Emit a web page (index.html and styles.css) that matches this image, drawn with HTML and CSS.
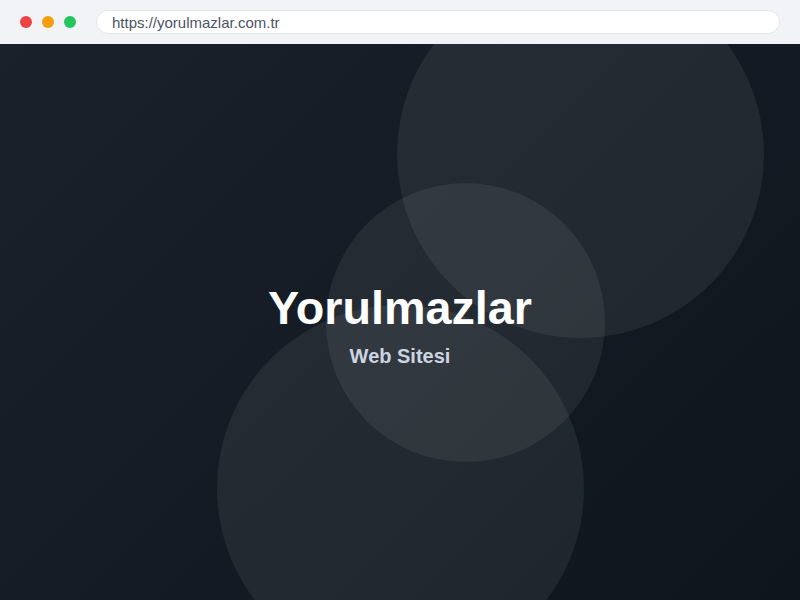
FILE: index.html
```
<!DOCTYPE html>
<html lang="tr">
<head>
<meta charset="utf-8">
<title>Yorulmazlar</title>
<link rel="stylesheet" href="styles.css">
</head>
<body>
<div class="window">
  <header class="chrome">
    <div class="dots">
      <span class="dot red"></span>
      <span class="dot orange"></span>
      <span class="dot green"></span>
    </div>
    <div class="url">https://yorulmazlar.com.tr</div>
  </header>
  <main class="hero">
    <span class="circle c1"></span>
    <span class="circle c2"></span>
    <span class="circle c3"></span>
    <div class="text">
      <h1 class="title">Yorulmazlar</h1>
      <p class="subtitle">Web Sitesi</p>
    </div>
  </main>
</div>
</body>
</html>
```
FILE: styles.css
```
* { box-sizing: border-box; }
html, body { margin: 0; padding: 0; }
body {
  width: 800px;
  height: 600px;
  overflow: hidden;
  font-family: "Liberation Sans", Arial, sans-serif;
}
.window {
  display: flex;
  flex-direction: column;
  height: 600px;
}
.chrome {
  height: 44px;
  background: #f1f3f7;
  display: flex;
  align-items: center;
  padding: 0 20px;
  gap: 20px;
  flex-shrink: 0;
}
.dots {
  display: flex;
  gap: 10px;
}
.dot {
  width: 12px;
  height: 12px;
  border-radius: 50%;
  display: block;
}
.red { background: #ef4444; }
.orange { background: #f59e0b; }
.green { background: #22c55e; }
.url {
  flex: 1;
  height: 24px;
  background: #ffffff;
  border: 1px solid #e2e6ec;
  border-radius: 12px;
  padding: 0 15px;
  display: flex;
  align-items: center;
  font-size: 15px;
  color: #4b5563;
}
.hero {
  position: relative;
  flex: 1;
  overflow: hidden;
  background: linear-gradient(135deg, #1a212b 0%, #0f151d 100%);
  display: flex;
  align-items: center;
  justify-content: center;
  padding-top: 6px;
}
.circle {
  position: absolute;
  border-radius: 50%;
  background: rgba(255, 255, 255, 0.065);
}
.c1 { width: 367px; height: 367px; left: 397px; top: -73px; }
.c2 { width: 279px; height: 279px; left: 326px; top: 139px; }
.c3 { width: 367px; height: 367px; left: 217px; top: 261px; }
.text {
  position: relative;
  text-align: center;
}
.title {
  margin: 0;
  font-size: 46.7px;
  line-height: 1.15;
  font-weight: 700;
  color: #ffffff;
}
.subtitle {
  margin: 10px 0 0;
  font-size: 20px;
  line-height: 1.15;
  font-weight: 700;
  color: #cbd5e1;
}
```
